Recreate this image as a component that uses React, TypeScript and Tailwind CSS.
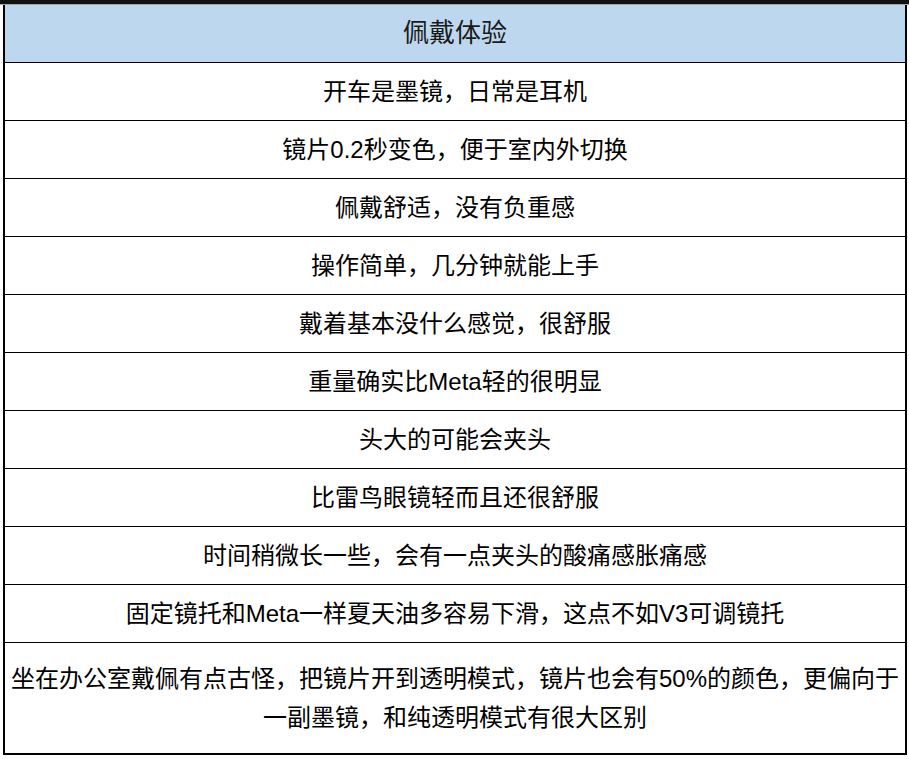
// 佩戴体验 — sheet-style single column table
const ROWS = [
  "开车是墨镜，日常是耳机",
  "镜片0.2秒变色，便于室内外切换",
  "佩戴舒适，没有负重感",
  "操作简单，几分钟就能上手",
  "戴着基本没什么感觉，很舒服",
  "重量确实比Meta轻的很明显",
  "头大的可能会夹头",
  "比雷鸟眼镜轻而且还很舒服",
  "时间稍微长一些，会有一点夹头的酸痛感胀痛感",
  "固定镜托和Meta一样夏天油多容易下滑，这点不如V3可调镜托",
];

export default function App() {
  return (
    <div
      className="w-[909px] h-[759px] overflow-hidden bg-white text-black"
      style={{ fontFamily: '"Liberation Sans", "Noto Sans CJK SC", sans-serif' }}
    >
      {/* top frame strip */}
      <div className="h-[4px] bg-[#111111]" />
      <div className="h-px bg-[#a6a6a6]" />

      <div className="flex">
        <div className="w-[3px] shrink-0" />
        <div className="w-[904px] shrink-0 border-l-2 border-r-2 border-black">
          {/* header */}
          <div className="h-[58px] bg-[#bdd7ee] border-b border-black flex items-center justify-center text-[26px] text-[#1a1a1a]">
            佩戴体验
          </div>

          {ROWS.map((r) => (
            <div
              key={r}
              className="h-[58px] border-b border-black flex items-center justify-center text-[24px] leading-none"
            >
              {r}
            </div>
          ))}

          <div className="h-[112px] border-b-2 border-black flex items-center justify-center px-1 text-center text-[24px] leading-[39px]">
            坐在办公室戴佩有点古怪，把镜片开到透明模式，镜片也会有50%的颜色，更偏向于一副墨镜，和纯透明模式有很大区别
          </div>
        </div>
      </div>
    </div>
  );
}
